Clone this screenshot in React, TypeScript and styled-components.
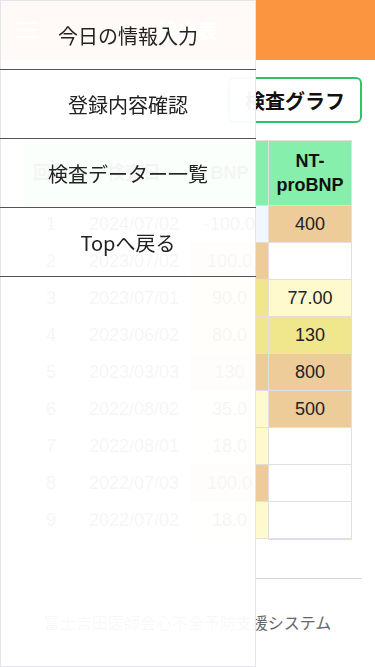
import React from 'react';
import styled, { createGlobalStyle } from 'styled-components';

const PEACH = '#eecc99';
const KHAKI = '#f0e68c';
const LEMON = '#fffacd';
const ICE = '#f0f7ff';

const GlobalStyle = createGlobalStyle`
    * {
        box-sizing: border-box;
    }
    body {
        margin: 0;
        background: #ffffff;
        font-family: 'Liberation Sans', 'Noto Sans CJK JP', sans-serif;
        color: #222;
    }
`;

const Page = styled.div`
    width: 375px;
    min-height: 667px;
    overflow: hidden;
`;

const Header = styled.header`
    height: 60px;
    background: #fb9540;
    display: grid;
    grid-template-columns: 60px 1fr 60px;
    align-items: center;
`;

const MenuIcon = styled.button`
    border: none;
    background: none;
    padding: 0 0 0 17px;
    display: flex;
    flex-direction: column;
    gap: 5px;
    cursor: pointer;
    span {
        display: block;
        width: 21px;
        height: 2px;
        background: #ffffff;
    }
`;

const Title = styled.h1`
    margin: 0;
    text-align: center;
    color: #ffffff;
    font-family: 'Noto Sans CJK JP', sans-serif;
    font-size: 20px;
    font-weight: 700;
`;

const Actions = styled.div`
    display: flex;
    justify-content: flex-end;
    padding: 17px 13px 0;
`;

const GraphButton = styled.button`
    width: 134px;
    height: 46px;
    border: 2px solid #2fc46a;
    border-radius: 6px;
    background: #ffffff;
    color: #111;
    font-family: 'Noto Sans CJK JP', sans-serif;
    font-size: 20px;
    font-weight: 700;
    padding: 0;
`;

const TableWrap = styled.div`
    width: 330px;
    max-height: 400px;
    margin: 17px 0 0 24px;
    overflow-y: auto;
    &::-webkit-scrollbar {
        width: 3px;
    }
    &::-webkit-scrollbar-thumb {
        background: #b3b3b3;
    }
    &::-webkit-scrollbar-track {
        background: transparent;
    }
`;

const Table = styled.table`
    width: 327px;
    border-collapse: collapse;
    table-layout: fixed;
    font-size: 18px;
`;

const Th = styled.th<{ $w: number }>`
    width: ${(p) => p.$w}px;
    height: 65px;
    background: #86efac;
    border: 1px solid #e0e0e0;
    color: #111;
    font-weight: 700;
    line-height: 24px;
    padding: 0 2px;
`;

const Td = styled.td<{ $bg?: string }>`
    height: 37px;
    padding: 0 2px;
    border: 1px solid #e0e0e0;
    background: ${(p) => p.$bg || '#ffffff'};
    text-align: center;
    color: #222;
    white-space: nowrap;
    overflow: hidden;
`;

const Footer = styled.footer`
    margin: 38px 13px 0;
    border-top: 1px solid #d5d5dd;
    padding-top: 31px;
    text-align: center;
    font-family: 'Noto Sans CJK JP', sans-serif;
    font-size: 16px;
    color: #666;
`;

const Drawer = styled.nav`
    position: fixed;
    top: 0;
    left: 0;
    width: 256px;
    height: 667px;
    background: rgba(255, 255, 255, 0.955);
    border: 1px solid #e4e4ea;
    display: flex;
    flex-direction: column;
`;

const MenuItem = styled.a`
    display: flex;
    align-items: center;
    justify-content: center;
    height: 69px;
    border-bottom: 1px solid #555;
    margin: 0 -1px;
    font-family: 'Noto Sans CJK JP', sans-serif;
    font-size: 20px;
    color: #222;
    text-decoration: none;
`;

type Row = {
    no: number;
    date: string;
    bnp: string;
    bnpBg?: string;
    nt: string;
    ntBg?: string;
};

const rows: Row[] = [
    { no: 1, date: '2024/07/02', bnp: '-100.0', bnpBg: ICE, nt: '400', ntBg: PEACH },
    { no: 2, date: '2023/07/02', bnp: '100.0', bnpBg: PEACH, nt: '' },
    { no: 3, date: '2023/07/01', bnp: '90.0', bnpBg: KHAKI, nt: '77.00', ntBg: LEMON },
    { no: 4, date: '2023/06/02', bnp: '80.0', bnpBg: KHAKI, nt: '130', ntBg: KHAKI },
    { no: 5, date: '2023/03/03', bnp: '130', bnpBg: PEACH, nt: '800', ntBg: PEACH },
    { no: 6, date: '2022/08/02', bnp: '35.0', bnpBg: LEMON, nt: '500', ntBg: PEACH },
    { no: 7, date: '2022/08/01', bnp: '18.0', bnpBg: LEMON, nt: '' },
    { no: 8, date: '2022/07/03', bnp: '100.0', bnpBg: PEACH, nt: '' },
    { no: 9, date: '2022/07/02', bnp: '18.0', bnpBg: LEMON, nt: '' },
    { no: 10, date: '2022/06/01', bnp: '', nt: '150', ntBg: KHAKI },
];

const menu = ['今日の情報入力', '登録内容確認', '検査データー一覧', 'Topへ戻る'];

const App = () => {
    return (
        <Page>
            <GlobalStyle />
            <Header>
                <MenuIcon aria-label="menu">
                    <span />
                    <span />
                    <span />
                </MenuIcon>
                <Title>検査表</Title>
                <div />
            </Header>
            <Actions>
                <GraphButton>検査グラフ</GraphButton>
            </Actions>
            <TableWrap>
                <Table>
                    <thead>
                        <tr>
                            <Th $w={53}>回数</Th>
                            <Th $w={113}>検査日</Th>
                            <Th $w={78}>BNP</Th>
                            <Th $w={83}>NT-proBNP</Th>
                        </tr>
                    </thead>
                    <tbody>
                        {rows.map((r) => (
                            <tr key={r.no}>
                                <Td>{r.no}</Td>
                                <Td>{r.date}</Td>
                                <Td $bg={r.bnpBg}>{r.bnp}</Td>
                                <Td $bg={r.ntBg}>{r.nt}</Td>
                            </tr>
                        ))}
                    </tbody>
                </Table>
            </TableWrap>
            <Footer>富士吉田医師会心不全予防支援システム</Footer>
            <Drawer>
                {menu.map((m) => (
                    <MenuItem key={m} href="#">
                        {m}
                    </MenuItem>
                ))}
            </Drawer>
        </Page>
    );
};

export default App;
